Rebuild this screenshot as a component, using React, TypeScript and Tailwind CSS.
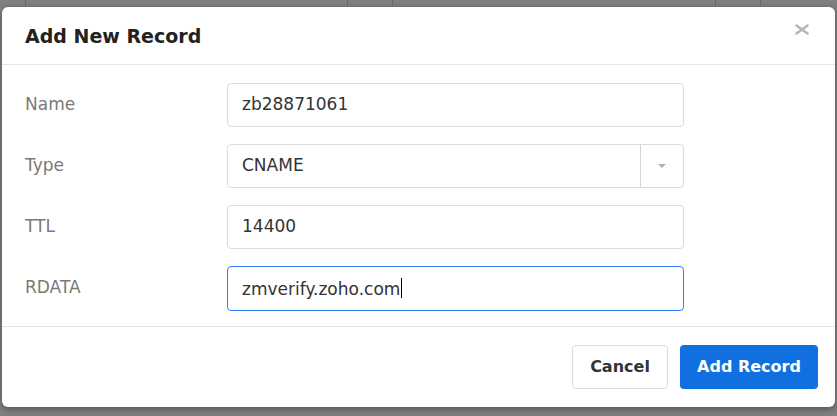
import { useState } from "react";

const rows = [
  { label: "Name", value: "zb28871061" },
  { label: "Type", value: "CNAME", select: true },
  { label: "TTL", value: "14400" },
  { label: "RDATA", value: "zmverify.zoho.com", focused: true },
];

function App() {
  const [values] = useState(rows);
  return (
    <div className="relative h-[416px] w-[837px] overflow-hidden bg-[#7f7f7f] pl-[2px] pt-[7px] font-['DejaVu_Sans',Verdana,sans-serif]">
      {/* table behind the overlay */}
      <div className="absolute left-[25px] top-0 h-[7px] w-px bg-[#666]" />
      <div className="absolute left-[347px] top-0 h-[7px] w-px bg-[#666]" />
      <div className="absolute left-[392px] top-0 h-[7px] w-px bg-[#666]" />
      <div className="absolute left-[715px] top-0 h-[7px] w-px bg-[#666]" />
      <div className="absolute left-[760px] top-0 h-[7px] w-px bg-[#666]" />

      <div className="flex h-[400px] w-[833px] flex-col rounded-[6px] bg-white shadow-[0_2px_6px_rgba(0,0,0,0.35)]">
        <div className="flex h-[58px] items-center justify-between border-b border-[#e5e5e5] pl-[23px] pr-[25px]">
          <h2 className="text-[19px] font-bold text-[#222] mt-[1px]">
            Add New Record
          </h2>
          <svg width="16" height="11" viewBox="0 0 16 11" className="mb-[12px]">
            <path d="M2.5 1.5 L13.5 9.5 M13.5 1.5 L2.5 9.5" stroke="#b3b6bb" strokeWidth="2.6" strokeLinecap="round" />
          </svg>
        </div>

        <div className="flex flex-col gap-[17px] border-b border-[#e5e5e5] pb-[15px] pt-[18px]">
          {values.map((r) => (
            <div key={r.label} className="flex items-start">
              <label className="w-[225px] pl-[23px] pt-[9px] text-[17px] text-[#7a7a7a]">
                {r.label}
              </label>
              <div
                className={
                  r.focused
                    ? "flex h-[45px] w-[457px] items-center rounded-[4px] border border-[#2f7cf6] pl-[14px] text-[17px] text-[#333]"
                    : "flex h-[44px] w-[457px] items-center rounded-[4px] border border-[#dcdcdf] pl-[14px] text-[17px] text-[#333]"
                }
              >
                <span className="flex-1">
                  {r.value}
                  {r.focused && <span className="ml-[1px] inline-block h-[20px] w-px translate-y-[3px] bg-black" />}
                </span>
                {r.select && (
                  <div className="flex h-full w-[43px] items-center justify-center border-l border-[#d5d5d8]">
                    <svg width="8" height="5" viewBox="0 0 8 5">
                      <path d="M0 0 H8 L4 4 Z" fill="#b0b0b4" />
                    </svg>
                  </div>
                )}
              </div>
            </div>
          ))}
        </div>

        <div className="flex flex-1 items-center justify-end gap-[12px] pr-[17px]">
          <button className="h-[44px] w-[96px] rounded-[4px] border border-[#dcdcdf] bg-white text-[16px] font-bold text-[#333]">
            Cancel
          </button>
          <button className="h-[44px] w-[138px] rounded-[4px] bg-[#1170df] text-[16px] font-bold text-white">
            Add Record
          </button>
        </div>
      </div>
    </div>
  );
}

export default App;
